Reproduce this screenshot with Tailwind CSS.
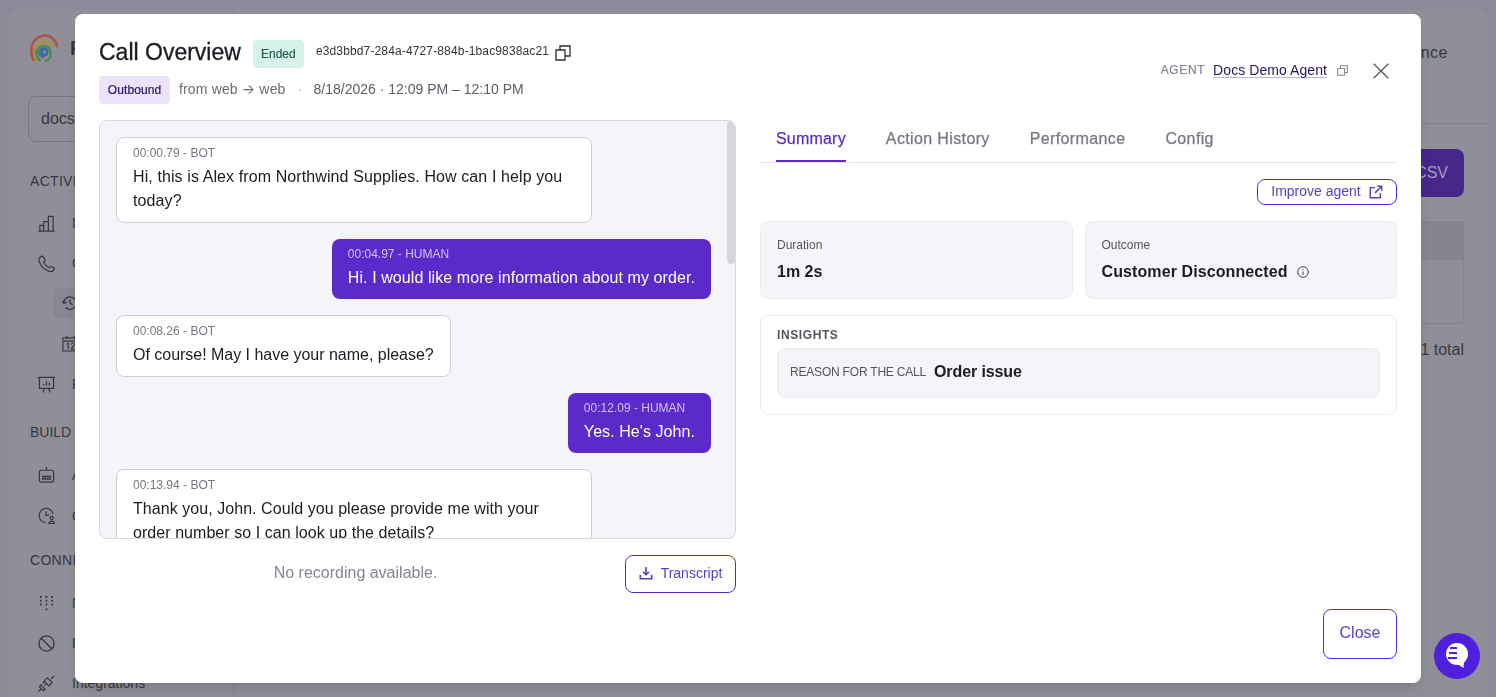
<!DOCTYPE html>
<html lang="en">
<head>
    <meta charset="UTF-8">
    <title>Call Overview</title>
    <script src="https://cdn.jsdelivr.net/npm/@tailwindcss/browser@4"></script>
</head>
<body class="h-[697px] overflow-hidden bg-[#8b8a98] font-['Liberation_Sans',sans-serif] text-[#1b1b22]">

    <!-- Dimmed app behind the dialog -->
    <div class="ml-[8px] mr-[8px] pt-[9px]">
        <div class="flex h-[688px] overflow-hidden rounded-t-xl bg-[#908f99] text-[#38373f]">
            <aside class="w-[226px] shrink-0 border-r border-[#83828e] pl-[22px] pr-4 pt-[23px]">
                <div class="flex items-center gap-3 h-[32px]">
                    <svg class="w-[28px] h-[30px]" viewBox="0 0 28 30" fill="none" stroke-width="2.800" stroke-linecap="round">
                        <path d="M3.500 27C.5 21 .5 12 5 7c6-6 15-6 20 1 1 1.500 1.800 3 2 5" stroke="#a8584a" />
                        <path d="M6.500 27c-3-5-3.500-11 .5-15 5-5 12-4 16 1" stroke="#a69244" />
                        <path d="M9.500 27c-3-3-4.500-8-1.500-11 3-4 10-4 12 1 2 5 0 9-4 11" stroke="#4f8a5b" />
                        <path d="M13 24c-3-1-4-4-3-6 2-3 6-3 7 0 1 2 0 4-2 4-2 .2-3-1-2.500-2.500" stroke="#3f6f99" />
                    </svg>
                    <span class="text-xl font-semibold">R</span>
                </div>
                <div class="-ml-[2px] mt-[32px] h-[46px] w-[190px] rounded-lg border border-[#777682] px-3 flex items-center">docs</div>
                <p class="mt-[29px] text-sm tracking-[0.3px]">ACTIVITY</p>
                <div class="mt-[12px] flex flex-col">
                    <div class="h-[40px] flex items-center gap-[17px] pl-[8px]">
                        <svg class="w-[17px] h-[17px]" viewBox="0 0 18 18" fill="none" stroke="#38373f" stroke-width="1.300"><path d="M.5 17h17M2 17v-6h4v6M6 17V7h5v10M11 17V1.500h5V17" /></svg>
                        <span class="text-sm">D</span>
                    </div>
                    <div class="h-[40px] flex items-center gap-[17px] pl-[8px]">
                        <svg class="w-[17px] h-[17px]" viewBox="0 0 18 18" fill="none" stroke="#38373f" stroke-width="1.300"><path d="M4.500 1 2 2.500C.8 3.500.8 6 2.500 9.500S7.500 15.500 11 17c1.800.7 4 .6 5.200-.6l1.300-1.900-1-1.300-2.800-1.200-1.900 1.400C10 13 6.500 9.500 6 7.500L7.500 6 6.500 3z" /></svg>
                        <span class="text-sm">C</span>
                    </div>
                    <div class="h-[40px] flex items-center">
                        <div class="ml-[23px] h-[31px] w-full rounded-l-md bg-[#888792] flex items-center pl-[9px]">
                            <svg class="w-[16px] h-[16px]" viewBox="0 0 18 18" fill="none" stroke="#38373f" stroke-width="1.400"><path d="M2 9a7 7 0 1 1 2 5M.5 6.500 2 9.500l3-1.500M9 5v4l3 2" /></svg>
                        </div>
                    </div>
                    <div class="ml-[23px] h-[40px] flex items-center pl-[9px]">
                        <svg class="w-[17px] h-[17px]" viewBox="0 0 18 18" fill="none" stroke="#38373f" stroke-width="1.200"><path d="M1 3h16v14H1zM1 6.500h16M5 1v3.500M13 1v3.500M5 9.500l1.500-.8V15M10 10c0-2 3.500-2 3.500 0 0 1.500-3.500 3-3.500 5h3.500" /></svg>
                    </div>
                    <div class="h-[42px] flex items-center gap-[17px] pl-[8px]">
                        <svg class="w-[17px] h-[17px]" viewBox="0 0 18 18" fill="none" stroke="#38373f" stroke-width="1.300"><path d="M0 1.500h18M1.500 1.500v11.500h15V1.500M5 17.500l2-4.500M13 17.500 11 13M6 10V8.500M9 10V5.500M12 10V7" /></svg>
                        <span class="text-sm">R</span>
                    </div>
                </div>
                <p class="mt-[17px] text-sm">BUILD</p>
                <div class="mt-[12px] flex flex-col">
                    <div class="h-[41px] flex items-center gap-[17px] pl-[8px]">
                        <svg class="w-[17px] h-[17px]" viewBox="0 0 18 18" fill="none" stroke="#38373f" stroke-width="1.300"><rect x="1.500" y="4.500" width="15" height="12.500" rx="2" /><path d="M9 4.500V1M5 11h8v3H5zM7.500 11v3M10.500 11v3M5.500 8h.1M12.500 8h.1" /></svg>
                        <span class="text-sm">A</span>
                    </div>
                    <div class="h-[41px] flex items-center gap-[17px] pl-[8px]">
                        <svg class="w-[17px] h-[17px]" viewBox="0 0 18 18" fill="none" stroke="#38373f" stroke-width="1.300"><path d="M16 7.500A7.500 7.500 0 1 0 8 16.500M8.500 4.500V9l3-.5M11.500 17.500c0-3.500 6-3.500 6 0z" /><circle cx="14.500" cy="11.500" r="1.700" /></svg>
                        <span class="text-sm">C</span>
                    </div>
                </div>
                <p class="mt-[14px] text-sm tracking-[0.3px]">CONNECT</p>
                <div class="mt-[13px] flex flex-col">
                    <div class="h-[40px] flex items-center gap-[17px] pl-[8px]">
                        <svg class="w-[17px] h-[17px]" viewBox="0 0 18 18" fill="#38373f"><circle cx="3" cy="2" r="1.100" /><circle cx="9" cy="2" r="1.100" /><circle cx="15" cy="2" r="1.100" /><circle cx="3" cy="6" r="1.100" /><circle cx="9" cy="6" r="1.100" /><circle cx="15" cy="6" r="1.100" /><circle cx="3" cy="10" r="1.100" /><circle cx="9" cy="10" r="1.100" /><circle cx="15" cy="10" r="1.100" /><circle cx="9" cy="15" r="1.100" /></svg>
                        <span class="text-sm">N</span>
                    </div>
                    <div class="h-[40px] flex items-center gap-[17px] pl-[8px]">
                        <svg class="w-[17px] h-[17px]" viewBox="0 0 18 18" fill="none" stroke="#38373f" stroke-width="1.400"><circle cx="9" cy="9" r="8" /><path d="m3.500 3.500 11 11" /></svg>
                        <span class="text-sm">D</span>
                    </div>
                    <div class="h-[40px] flex items-center gap-[17px] pl-[8px]">
                        <svg class="w-[17px] h-[17px]" viewBox="0 0 18 18" fill="none" stroke="#38373f" stroke-width="1.300"><path d="M3 10.500 7.500 15 5.500 16.500 1.500 12.500zM9 9l-2 2M7 7 5 9M10 3l5 5-3.500 3.500-5-5zM14 4l3-3M3 15l-2.500 2.500" /></svg>
                        <span class="text-sm">Integrations</span>
                    </div>
                </div>
            </aside>
            <main class="flex-1 pr-[24px] text-right">
                <div class="h-[115px] border-b border-[#83828e] pt-[32px] -mr-[24px] pr-[40px] text-base tracking-[0.5px]">Performance</div>
                <div class="mt-[25px] flex justify-end">
                    <div class="w-[200px] h-[48px] rounded-lg bg-[#46278a] text-[#a79bc0] flex items-center justify-end pr-4">Export CSV</div>
                </div>
                <div class="mt-6 h-[103px] border border-[#83828e]">
                    <div class="h-[38px] bg-[#85848f] border-b border-[#83828e]"></div>
                </div>
                <p class="mt-[14px]">1 total</p>
            </main>
        </div>
    </div>

    <!-- Call overview dialog -->
    <div class="fixed left-[75px] top-[14px] w-[1346px] h-[669px] rounded-lg bg-white px-6 pt-6 shadow-lg flex flex-col">
        <header class="h-[82px] flex justify-between">
            <div>
                <div class="flex items-start h-[36px] pt-[2px]">
                    <h1 class="text-[23px] leading-[25px] [-webkit-text-stroke:0.3px]">Call Overview</h1>
                    <span class="ml-3 h-[28px] w-[51px] rounded bg-[#d7f3e8] text-[#1f5c48] text-xs [-webkit-text-stroke:0.2px] flex items-center justify-center pb-[1px]">Ended</span>
                    <span class="ml-3 text-xs leading-[23px] tracking-[0.14px] text-[#34333b]">e3d3bbd7-284a-4727-884b-1bac9838ac21</span>
                    <svg class="ml-[6px] mt-[5px] w-[16px] h-[16px]" viewBox="0 0 16 16" fill="none" stroke="#2d2c34" stroke-width="1.300"><path d="M1 5h9v10H1zM5 5V1h10v10h-5" /></svg>
                </div>
                <div class="flex items-center mt-[2px] h-[28px] text-sm leading-[26px] text-[#6c6b76]">
                    <span class="h-[28px] w-[71px] rounded bg-[#ebe4fb] text-[#2b1265] text-xs tracking-[0.1px] [-webkit-text-stroke:0.2px] flex items-center justify-center pb-[1px]">Outbound</span>
                    <span class="ml-[9px] -mt-[2px] tracking-[0.15px]">from web <span class="font-['Inter']">→</span> web</span>
                    <span class="ml-3 -mt-[2px] w-[3px] text-center text-[#b4b3bd]">·</span>
                    <span class="ml-[13px] -mt-[2px] text-[#5d5c67]">8/18/2026 · 12:09 PM – 12:10 PM</span>
                </div>
            </div>
            <div class="flex items-center h-[65px]">
                <span class="text-xs tracking-wider [-webkit-text-stroke:0.2px] text-[#85848f] -mt-[1px]">AGENT</span>
                <a class="ml-2 -mt-[1px] text-sm tracking-[0.07px] text-[#2b1265] underline decoration-[#bdb8cc] underline-offset-2">Docs Demo Agent</a>
                <svg class="ml-[10px] w-[11px] h-[11px]" viewBox="0 0 16 16" fill="none" stroke="#85848f" stroke-width="1.500"><path d="M1 5h10v10H1zM5 5V1h10v10h-4" /></svg>
                <svg class="ml-[25px] mr-2 mt-[1px] w-[16px] h-[16px]" viewBox="0 0 16 16" fill="none" stroke="#55545e" stroke-width="1.300"><path d="m.7.700 14.600 14.600M15.300.700.700 15.300" /></svg>
            </div>
        </header>

        <div class="flex gap-6 h-[473px]">
            <section class="w-[637px] shrink-0">
                <div class="relative h-[419px] overflow-hidden rounded-lg border border-[#d8d8e2] bg-[#f4f4f9] pl-4 pr-6 pt-4 flex flex-col gap-4">
                    <div class="absolute right-0 top-0 w-2 h-[143px] rounded-sm bg-[#d5d5de]"></div>
                    <div class="w-[476px] shrink-0 rounded-lg border border-[#cfcfd9] bg-white px-4 pt-[7px] pb-[9px]">
                        <p class="text-xs leading-[16px] text-[#777681]">00:00.79 - BOT</p>
                        <p class="mt-1 leading-[24px] tracking-[0.1px]">Hi, this is Alex from Northwind Supplies. How can I help you today?</p>
                    </div>
                    <div class="self-end shrink-0 rounded-lg bg-[#5a2bc9] text-white px-4 pt-[7px] pb-[9px]">
                        <p class="text-xs leading-[16px] text-[#cfc3f2]">00:04.97 - HUMAN</p>
                        <p class="mt-1 leading-[24px] tracking-[0.08px]">Hi. I would like more information about my order.</p>
                    </div>
                    <div class="self-start shrink-0 rounded-lg border border-[#cfcfd9] bg-white px-4 pt-[7px] pb-[9px]">
                        <p class="text-xs leading-[16px] text-[#777681]">00:08.26 - BOT</p>
                        <p class="mt-1 leading-[24px] tracking-[-0.02px]">Of course! May I have your name, please?</p>
                    </div>
                    <div class="self-end shrink-0 rounded-lg bg-[#5a2bc9] text-white px-4 pt-[7px] pb-[9px]">
                        <p class="text-xs leading-[16px] text-[#cfc3f2]">00:12.09 - HUMAN</p>
                        <p class="mt-1 leading-[24px] tracking-[0.07px]">Yes. He's John.</p>
                    </div>
                    <div class="w-[476px] shrink-0 rounded-lg border border-[#cfcfd9] bg-white px-4 pt-[7px] pb-[9px]">
                        <p class="text-xs leading-[16px] text-[#777681]">00:13.94 - BOT</p>
                        <p class="mt-1 leading-[24px] tracking-[0.055px]">Thank you, John. Could you please provide me with your order number so I can look up the details?</p>
                    </div>
                </div>
                <div class="mt-4 flex items-center">
                    <p class="w-[526px] pr-[13px] pb-[2px] text-center text-[#85848f]">No recording available.</p>
                    <button class="w-[111px] h-[38px] rounded-lg border border-[#5a2bc9] text-sm text-[#5a3fc0] flex items-center justify-center gap-2 pb-[2px]">
                        <svg class="w-[14px] h-[14px]" viewBox="0 0 16 16" fill="none" stroke="#5a3fc0" stroke-width="1.800"><path d="M8 1v9M4.500 6.500 8 10l3.500-3.500M1.500 10v4.500h13V10" /></svg>
                        Transcript
                    </button>
                </div>
            </section>

            <section class="flex-1 flex flex-col">
                <nav class="h-[43px] border-b border-[#e4e4ea] pl-4 flex gap-10 text-[#777681] tracking-[0.37px] [-webkit-text-stroke:0.25px]">
                    <span class="h-[42px] border-b-2 border-[#5a2bc9] text-[#5a2bc9] leading-[37px] tracking-[0.2px]">Summary</span>
                    <span class="leading-[37px]">Action History</span>
                    <span class="leading-[37px]">Performance</span>
                    <span class="leading-[37px]">Config</span>
                </nav>
                <div class="mt-4 flex justify-end">
                    <button class="w-[140px] h-[26px] rounded-lg border border-[#5a2bc9] text-sm text-[#5a3fc0] flex items-center justify-center gap-2 pb-[2px]">
                        Improve agent
                        <svg class="w-[14px] h-[14px] mt-[2px]" viewBox="0 0 16 16" fill="none" stroke="#5a3fc0" stroke-width="1.700"><path d="M7 3H1.500v11.500H13V9M9.500 1.500h5v5M14.500 1.500 7 9" /></svg>
                    </button>
                </div>
                <div class="mt-4 grid grid-cols-2 gap-3">
                    <div class="h-[78px] rounded-lg border border-[#ebebf0] bg-[#f5f5f9] px-4 pt-[15px]">
                        <p class="text-xs leading-[16px] text-[#55545e]">Duration</p>
                        <p class="mt-[9px] font-semibold leading-[20px]">1m 2s</p>
                    </div>
                    <div class="h-[78px] rounded-lg border border-[#ebebf0] bg-[#f5f5f9] px-4 pt-[15px]">
                        <p class="text-xs leading-[16px] text-[#55545e]">Outcome</p>
                        <p class="mt-[9px] font-semibold leading-[20px] tracking-[0.1px] flex items-center gap-[9px]">
                            Customer Disconnected
                            <svg class="w-[12px] h-[12px]" viewBox="0 0 12 12" fill="none" stroke="#44434c"><circle cx="6" cy="6" r="5.300" /><path d="M6 5.500V9M6 3v1" /></svg>
                        </p>
                    </div>
                </div>
                <div class="mt-4 h-[100px] rounded-lg border border-[#ebebf0] px-4 pt-[11px]">
                    <p class="text-xs leading-[16px] font-semibold tracking-wider text-[#55545e]">INSIGHTS</p>
                    <div class="mt-[5px] h-[50px] rounded-lg border border-[#ebebf0] bg-[#f5f5f9] px-3 flex items-center gap-2 pb-[2px]">
                        <span class="text-xs tracking-[-0.2px] text-[#55545e]">REASON FOR THE CALL</span>
                        <span class="font-semibold tracking-[-0.1px]">Order issue</span>
                    </div>
                </div>
            </section>
        </div>

        <div class="mt-4 flex justify-end">
            <button class="w-[74px] h-[50px] rounded-lg border border-[#5a2bc9] text-[#5a3fc0] pb-[2px]">Close</button>
        </div>
    </div>

    <!-- Chat launcher -->
    <button class="fixed left-[1434px] top-[633px] w-[46px] h-[46px] rounded-full bg-[#4f1fdc] flex items-start pt-[10px] justify-center">
        <svg class="w-[24px] h-[26px]" viewBox="0 0 24 26">
            <circle cx="12" cy="11" r="11" fill="#fff" />
            <path d="M19 18 18.500 25 13 21.500z" fill="#fff" />
            <path d="M5 5h7M4 10h8M3 15h9" stroke="#4f1fdc" stroke-width="1.800" />
        </svg>
    </button>

</body>
</html>
